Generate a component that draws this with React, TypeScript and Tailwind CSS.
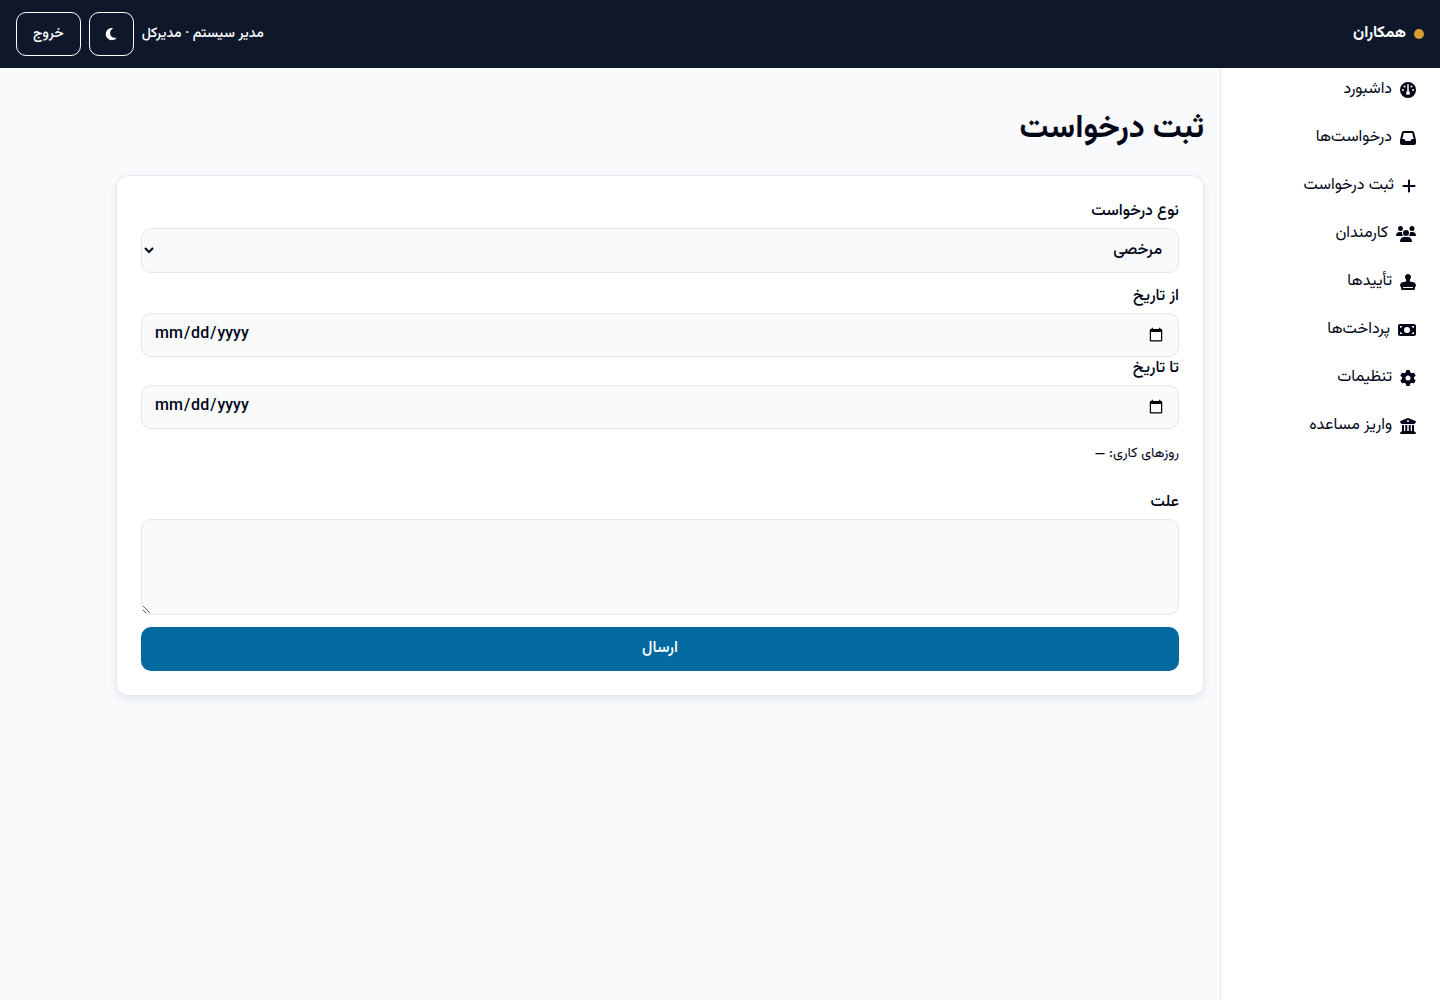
import { useState } from 'react';
import {
  FaBuildingColumns,
  FaGauge,
  FaGear,
  FaInbox,
  FaMoneyBill,
  FaMoon,
  FaPlus,
  FaStamp,
  FaUsers
} from 'react-icons/fa6';

const navItems = [
  { label: 'داشبورد', icon: FaGauge, width: 'w-4' },
  { label: 'درخواست‌ها', icon: FaInbox, width: 'w-4' },
  { label: 'ثبت درخواست', icon: FaPlus, width: 'w-[14px]' },
  { label: 'کارمندان', icon: FaUsers, width: 'w-5' },
  { label: 'تأییدها', icon: FaStamp, width: 'w-4' },
  { label: 'پرداخت‌ها', icon: FaMoneyBill, width: 'w-[18px]' },
  { label: 'تنظیمات', icon: FaGear, width: 'w-4' },
  { label: 'واریز مساعده', icon: FaBuildingColumns, width: 'w-4' }
];

const fieldClass =
  'block w-full rounded-[10px] border border-[#e2e8f0] bg-[#f8fafc] px-3 font-medium text-[#020617]';

const Header = () => (
  <header className="flex h-[68px] items-center justify-between bg-[#0f172a] px-4 text-white">
    <div className="flex items-center gap-2 font-bold">
      <span className="size-[10px] rounded-full bg-[#d69e2e]" />
      <span>همکاران</span>
    </div>
    <div className="flex items-center gap-2 text-sm font-medium">
      <span>مدیر سیستم · مدیرکل</span>
      <button
        type="button"
        aria-label="تغییر پوسته"
        className="flex h-11 w-[45px] items-center justify-center rounded-[10px] border border-white"
      >
        <FaMoon className="h-[14px] w-3" />
      </button>
      <button type="button" className="h-11 rounded-[10px] border border-white px-4">
        خروج
      </button>
    </div>
  </header>
);

const Sidebar = () => (
  <nav className="flex w-[220px] shrink-0 flex-col gap-1 border-l border-[#e2e8f0] bg-white px-2">
    {navItems.map(({ label, icon: Icon, width }) => (
      <a key={label} href="#" className="flex h-11 items-center gap-2 px-4">
        <Icon className={`h-4 shrink-0 ${width}`} />
        <span>{label}</span>
      </a>
    ))}
  </nav>
);

const RequestForm = () => {
  const [type, setType] = useState('leave');

  return (
    <form
      onSubmit={(e) => e.preventDefault()}
      className="flex flex-col gap-3 rounded-xl border border-[#e2e8f0] bg-white p-6 shadow-[0_4px_8px_rgba(15,23,42,0.08)]"
    >
      <div>
        <label htmlFor="type" className="mb-1 block font-medium leading-6">
          نوع درخواست
        </label>
        <select
          id="type"
          value={type}
          onChange={(e) => setType(e.target.value)}
          className={`${fieldClass} h-[45px]`}
        >
          <option value="leave">مرخصی</option>
        </select>
      </div>

      <div>
        <label htmlFor="from" className="mb-1 block font-medium leading-6">
          از تاریخ
        </label>
        <input id="from" type="date" dir="ltr" className={`${fieldClass} h-11`} />
        <label htmlFor="to" className="mb-1 block font-medium leading-6">
          تا تاریخ
        </label>
        <input id="to" type="date" dir="ltr" className={`${fieldClass} h-11`} />
      </div>

      <p className="mb-3 text-sm leading-[26px]">روزهای کاری: —</p>

      <div>
        <label htmlFor="reason" className="mb-1 block font-medium leading-6">
          علت
        </label>
        <textarea id="reason" className={`${fieldClass} h-24 py-2`} />
      </div>

      <button type="submit" className="h-11 rounded-[10px] bg-[#0369a1] font-medium text-white">
        ارسال
      </button>
    </form>
  );
};

const App = () => {
  return (
    <div
      dir="rtl"
      className="flex min-h-screen flex-col bg-[#f8fafc] font-[Vazirmatn,Roboto,'DejaVu_Sans',sans-serif] text-[#020617]"
    >
      <Header />
      <div className="flex grow">
        <Sidebar />
        <main className="max-w-[1120px] grow px-4 pt-9">
          <h1 className="mb-[21px] text-[32px] font-bold leading-[50px]">ثبت درخواست</h1>
          <RequestForm />
        </main>
      </div>
    </div>
  );
};

export default App;
